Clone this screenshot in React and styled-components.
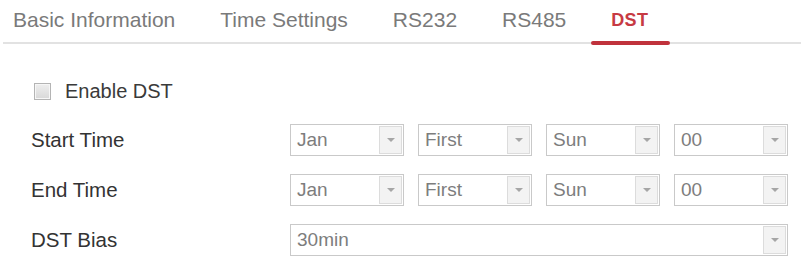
import React from 'react';
import styled, { createGlobalStyle } from 'styled-components';

const GlobalStyle = createGlobalStyle`
  body {
    margin: 0;
    background: #ffffff;
    font-family: "Liberation Sans", Arial, sans-serif;
  }
`;

const Page = styled.div`
  width: 801px;
  height: 259px;
  overflow: hidden;
  background: #ffffff;
`;

const TabBar = styled.div`
  display: flex;
  align-items: stretch;
  gap: 45px;
  height: 42px;
  margin-left: 3px;
  padding-left: 10px;
  border-bottom: 2px solid #e2e2e2;
`;

const Tab = styled.div`
  position: relative;
  display: flex;
  align-items: center;
  padding-bottom: 2px;
  color: ${(p) => (p.$active ? '#c73a43' : '#7a7a7a')};
  font-weight: ${(p) => (p.$active ? 'bold' : 'normal')};
  font-size: ${(p) => (p.$active ? '18px' : '21px')};
  letter-spacing: ${(p) => (p.$active ? '0.3px' : '0')};

  &::after {
    content: '';
    display: ${(p) => (p.$active ? 'block' : 'none')};
    position: absolute;
    left: -20px;
    right: -22px;
    bottom: -3px;
    height: 4px;
    border-radius: 2px;
    background: #c0323c;
  }
`;

const Form = styled.div`
  padding-top: 23px;
`;

const CheckRow = styled.label`
  display: flex;
  align-items: center;
  height: 48px;
  padding-left: 34px;
  font-size: 20px;
  color: #3a3a3a;
`;

const CheckBox = styled.span`
  width: 15px;
  height: 15px;
  margin-right: 14px;
  border: 1px solid #b4b4b4;
  background: linear-gradient(#eeeeee, #d8d8d8);
  box-shadow: inset 0 0 0 1px #f6f6f6;
`;

const Row = styled.div`
  display: flex;
  align-items: center;
  height: 50px;
`;

const Label = styled.div`
  width: 259px;
  padding-left: 31px;
  font-size: 20.5px;
  color: #333333;
`;

const SelectGroup = styled.div`
  display: grid;
  grid-template-columns: repeat(${(p) => p.$cols}, 1fr);
  gap: 14px;
  width: 498px;
`;

const SelectBox = styled.div`
  display: flex;
  align-items: stretch;
  height: 32px;
  box-sizing: border-box;
  border: 1px solid #c9c9c9;
  background: #ffffff;
`;

const SelectValue = styled.div`
  flex: 1;
  display: flex;
  align-items: center;
  padding-left: 6px;
  font-size: 19px;
  color: #7d7d7d;
`;

const SelectButton = styled.div`
  width: 21px;
  margin: 1px;
  display: flex;
  align-items: center;
  justify-content: center;
  border: 1px solid #dcdcdc;
  background: #f3f3f3;
`;

const Arrow = styled.span`
  width: 0;
  height: 0;
  border-left: 4px solid transparent;
  border-right: 4px solid transparent;
  border-top: 4px solid #a6a6a6;
`;

const Select = ({ value }) => (
  <SelectBox>
    <SelectValue>{value}</SelectValue>
    <SelectButton>
      <Arrow />
    </SelectButton>
  </SelectBox>
);

const tabs = ['Basic Information', 'Time Settings', 'RS232', 'RS485', 'DST'];
const timeValues = ['Jan', 'First', 'Sun', '00'];

export default function App() {
  return (
    <Page>
      <GlobalStyle />
      <TabBar>
        {tabs.map((t) => (
          <Tab key={t} $active={t === 'DST'}>
            {t}
          </Tab>
        ))}
      </TabBar>
      <Form>
        <CheckRow>
          <CheckBox />
          Enable DST
        </CheckRow>
        {['Start Time', 'End Time'].map((label) => (
          <Row key={label}>
            <Label>{label}</Label>
            <SelectGroup $cols={4}>
              {timeValues.map((v) => (
                <Select key={v} value={v} />
              ))}
            </SelectGroup>
          </Row>
        ))}
        <Row>
          <Label>DST Bias</Label>
          <SelectGroup $cols={1}>
            <Select value="30min" />
          </SelectGroup>
        </Row>
      </Form>
    </Page>
  );
}
